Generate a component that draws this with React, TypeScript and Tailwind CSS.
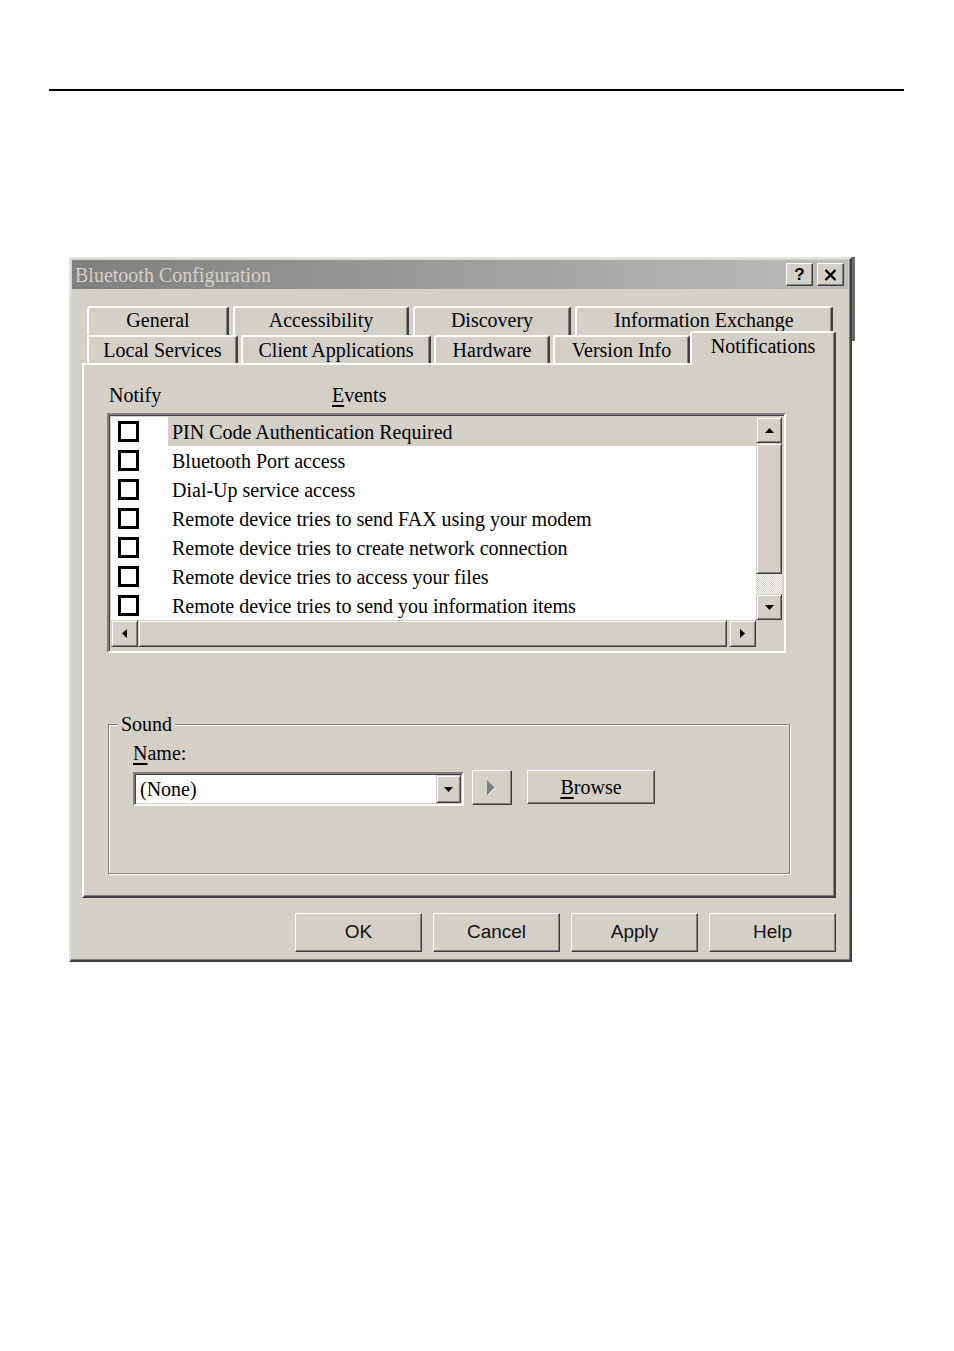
import React from "react";

const serif = "font-['Liberation_Serif','Times_New_Roman',serif]";
const sans = "font-['Liberation_Sans',Arial,sans-serif]";

// 3D borders, win2000 style
const raised =
    "bg-[#d4d0c8] border border-t-[#d4d0c8] border-l-[#d4d0c8] border-r-[#404040] border-b-[#404040] shadow-[inset_1px_1px_0_#fff,inset_-1px_-1px_0_#808080]";
const pushBtn =
    "bg-[#d4d0c8] border border-t-white border-l-white border-r-[#404040] border-b-[#404040] shadow-[inset_-1px_-1px_0_#808080]";
const sunken =
    "border border-t-[#808080] border-l-[#808080] border-r-white border-b-white shadow-[inset_1px_1px_0_#404040,inset_-1px_-1px_0_#d4d0c8]";

const events = [
    "PIN Code Authentication Required",
    "Bluetooth Port access",
    "Dial-Up service access",
    "Remote device tries to send FAX using your modem",
    "Remote device tries to create network connection",
    "Remote device tries to access your files",
    "Remote device tries to send you information items",
];

function Arrow({ dir, color = "#000" }: { dir: "up" | "down" | "left" | "right"; color?: string }) {
    const pts = {
        up: "0,5 9,5 4.5,0",
        down: "0,0 9,0 4.5,5",
        left: "5,0 0,4.5 5,9",
        right: "0,0 5,4.5 0,9",
    }[dir];
    const vertical = dir === "up" || dir === "down";
    return (
        <svg width={vertical ? 9 : 5} height={vertical ? 5 : 9} viewBox={vertical ? "0 0 9 5" : "0 0 5 9"}>
            <polygon points={pts} fill={color} />
        </svg>
    );
}

function TabItem({ label, w, back = false }: { label: string; w: number; back?: boolean }) {
    return (
        <div
            style={{ width: w }}
            className={`h-full flex items-center justify-center rounded-t-[3px] border-t-2 border-l-2 border-r-2 border-t-white border-l-white border-r-[#404040] shadow-[inset_-1px_0_0_#808080] bg-[#d4d0c8] text-[20px] text-black ${back ? "pb-[3px]" : ""}`}
        >
            {label}
        </div>
    );
}

export default function App() {
    return (
        <div className={`w-[954px] h-[1351px] bg-white overflow-hidden ${serif}`}>
            <div className="mt-[89px] ml-[49px] w-[855px] h-[2px] bg-black" />

            <div className="mt-[166px] ml-[69px] flex">
                {/* dialog window */}
                <div className="w-[783px] h-[705px] bg-[#d4d0c8] border-2 border-t-[#e4e2dc] border-l-[#e4e2dc] border-r-[#404040] border-b-[#404040] shadow-[inset_-1px_-1px_0_#808080]">
                    {/* title bar */}
                    <div className="ml-[1px] mr-[2px] mt-[1px] h-[29px] flex items-center justify-between bg-gradient-to-r from-[#808080] to-[#bdbdbd] pl-[3px] pr-[4px]">
                        <span className="text-[20px] text-[#d4d0c8] leading-none">Bluetooth Configuration</span>
                        <div className="flex gap-[4px]">
                            <div className={`w-[27px] h-[23px] flex items-center justify-center ${pushBtn}`}>
                                <span className={`${sans} font-bold text-[17px] leading-none text-black`}>?</span>
                            </div>
                            <div className={`w-[27px] h-[23px] flex items-center justify-center ${pushBtn}`}>
                                <svg width="13" height="12" viewBox="0 0 13 12">
                                    <path d="M1.5 1 L11.5 11 M11.5 1 L1.5 11" stroke="#000" strokeWidth="2.4" />
                                </svg>
                            </div>
                        </div>
                    </div>

                    {/* tabs + panel */}
                    <div className="ml-[11px] mt-[17px] w-[754px]">
                        <div className="h-[29px] flex pl-[5px] gap-[4px]">
                            <TabItem label="General" w={142} back />
                            <TabItem label="Accessibility" w={176} back />
                            <TabItem label="Discovery" w={158} back />
                            <TabItem label="Information Exchange" w={258} back />
                        </div>
                        <div className="h-[28px] flex items-end pl-[5px]">
                            <div className="h-full flex gap-[3px]">
                                <TabItem label="Local Services" w={151} />
                                <TabItem label="Client Applications" w={190} />
                                <TabItem label="Hardware" w={116} />
                                <TabItem label="Version Info" w={137} />
                            </div>
                            <div className="relative top-[2px] z-10 w-[146px] h-[34px] flex justify-center leading-[24px] pt-[1px] rounded-t-[3px] border-t-2 border-l-2 border-r-2 border-t-white border-l-white border-r-[#404040] shadow-[inset_-1px_0_0_#808080] bg-[#d4d0c8] text-[20px] text-black">
                                Notifications
                            </div>
                        </div>

                        <div className="h-[535px] border-2 border-t-white border-l-white border-r-[#404040] border-b-[#404040] shadow-[inset_-1px_-1px_0_#808080] text-black">
                            {/* header */}
                            <div className="mt-[18px] ml-[25px] h-[24px] flex items-center text-[20px]">
                                <span className="w-[223px]">Notify</span>
                                <span>
                                    <span className="underline underline-offset-[3px]">E</span>vents
                                </span>
                            </div>

                            {/* list box */}
                            <div className={`mt-[6px] ml-[23px] w-[679px] h-[240px] bg-[#d4d0c8] ${sunken} border-2 p-[1px] flex`}>
                                <div className="w-[645px] ml-[1px] mt-[1px] flex flex-col">
                                    <div className="h-[203px] bg-white flex flex-col">
                                        {events.map((ev, i) => (
                                            <div key={ev} className="h-[29px] flex items-center">
                                                <div className="ml-[7px] w-[21px] h-[21px] border-[3px] border-black bg-white" />
                                                <div
                                                    className={`ml-[29px] flex-1 h-full flex items-center pl-[4px] text-[20px] whitespace-nowrap ${
                                                        i === 0 ? "bg-[#d4d0c8]" : ""
                                                    }`}
                                                >
                                                    {ev}
                                                </div>
                                            </div>
                                        ))}
                                    </div>
                                    <div className="h-[27px] flex bg-[#d4d0c8]">
                                        <div className={`w-[27px] h-full flex items-center justify-center ${raised}`}>
                                            <Arrow dir="left" />
                                        </div>
                                        <div className={`flex-1 h-full ${raised}`} />
                                        <div className="w-[2px]" />
                                        <div className={`w-[27px] h-full flex items-center justify-center ${raised}`}>
                                            <Arrow dir="right" />
                                        </div>
                                    </div>
                                </div>
                                <div className="w-[26px] mt-[1px] flex flex-col">
                                    <div className={`h-[26px] flex items-center justify-center ${raised}`}>
                                        <Arrow dir="up" />
                                    </div>
                                    <div className={`h-[131px] ${raised}`} />
                                    <div className="h-[20px] bg-[repeating-conic-gradient(#d4d0c8_0_25%,#ffffff_0_50%)] bg-[length:2px_2px]" />
                                    <div className={`h-[26px] flex items-center justify-center ${raised}`}>
                                        <Arrow dir="down" />
                                    </div>
                                    <div className="flex-1 bg-[#d4d0c8]" />
                                </div>
                            </div>

                            {/* sound group */}
                            <div className="relative mt-[71px] ml-[24px] w-[682px] h-[150px] border border-[#808080] shadow-[1px_1px_0_#fff,inset_1px_1px_0_#fff] pl-[24px] pt-[16px]">
                                <span className="absolute left-[9px] -top-[13px] px-[3px] bg-[#d4d0c8] text-[20px] leading-[24px]">
                                    Sound
                                </span>
                                <div className="h-[24px] flex items-center text-[20px]">
                                    <span>
                                        <span className="underline underline-offset-[3px]">N</span>ame:
                                    </span>
                                </div>
                                <div className="mt-[5px] flex items-start">
                                    <div className={`mt-[2px] w-[331px] h-[34px] bg-white border-2 ${sunken} flex items-center`}>
                                        <span className="flex-1 pl-[5px] text-[20px]">(None)</span>
                                        <div className={`w-[25px] h-[28px] mr-[1px] flex items-center justify-center ${raised}`}>
                                            <Arrow dir="down" />
                                        </div>
                                    </div>
                                    <div className={`ml-[8px] w-[40px] h-[35px] flex items-center justify-center ${pushBtn}`}>
                                        <svg width="10" height="16" viewBox="0 0 10 16">
                                            <polygon points="1,1 9,8 1,15" fill="#fff" />
                                            <polygon points="0,0 8,7.5 0,15" fill="#808080" />
                                        </svg>
                                    </div>
                                    <div className={`ml-[15px] w-[128px] h-[34px] flex items-center justify-center text-[20px] ${pushBtn}`}>
                                        <span>
                                            <span className="underline underline-offset-[3px]">B</span>rowse
                                        </span>
                                    </div>
                                </div>
                            </div>
                        </div>
                    </div>

                    {/* bottom buttons */}
                    <div className={`mt-[15px] pl-[224px] flex gap-[11px] ${sans}`}>
                        {["OK", "Cancel", "Apply", "Help"].map((b) => (
                            <div
                                key={b}
                                className={`w-[127px] h-[39px] flex items-center justify-center text-[19px] text-[#111] ${pushBtn}`}
                            >
                                {b}
                            </div>
                        ))}
                    </div>
                </div>
                <div className="w-[3px] h-[84px] bg-[#6b6b6b] mt-[0px]" />
            </div>
        </div>
    );
}
